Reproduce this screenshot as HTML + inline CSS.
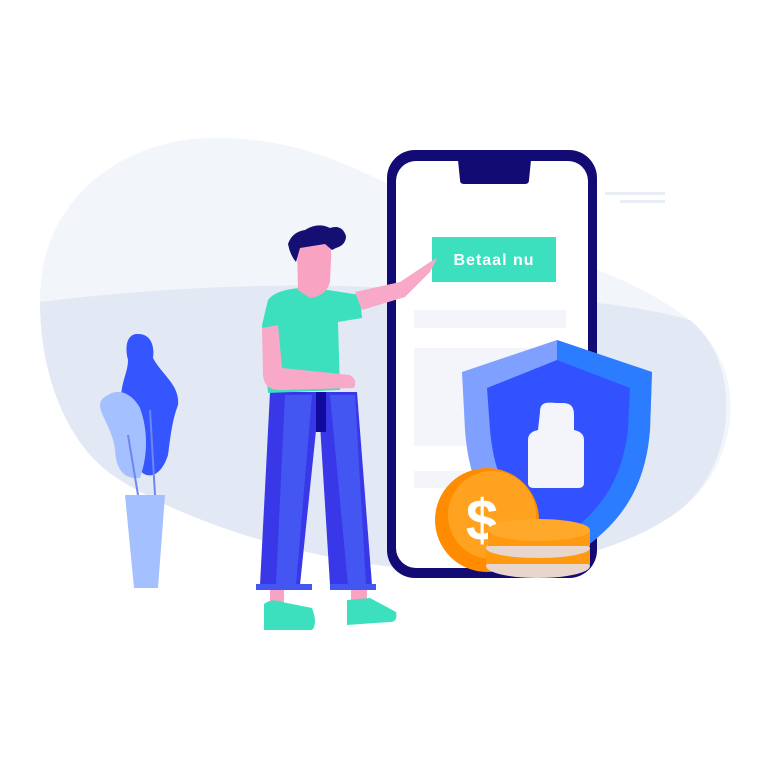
<!DOCTYPE html>
<html><head><style>html,body{margin:0;padding:0;background:#fff}svg{display:block}</style></head>
<body>
<svg width="771" height="771" viewBox="0 0 771 771" xmlns="http://www.w3.org/2000/svg">
<path d="M40,300 C40,200 120,140 210,138 C300,136 360,170 420,200 C520,250 640,270 700,330 C750,380 735,470 680,510 C620,555 520,575 430,570 C330,565 200,530 120,480 C70,450 40,380 40,300Z" fill="#f2f5fa"/>
<path d="M40,302 C150,288 300,280 420,290 C540,298 620,300 690,320 C740,360 740,460 680,510 C620,555 520,575 430,570 C330,565 200,530 120,480 C70,450 40,380 40,302Z" fill="#e3e9f4"/>
<g fill="#e8edf6"><rect x="605" y="192" width="60" height="3"/><rect x="620" y="200" width="45" height="3"/></g>
<path d="M137,334 C150,333 155,345 153,358 C162,375 180,385 178,405 C172,420 170,440 168,455 C160,480 145,478 140,470 C130,450 125,430 122,410 C118,385 128,375 128,360 C124,345 128,334 137,334Z" fill="#3555ff"/>
<path d="M108,395 C118,388 132,393 140,408 C148,430 148,455 140,478 C125,480 116,470 115,450 C113,430 100,415 100,405 C100,400 104,397 108,395Z" fill="#a4c0ff"/>
<path d="M125,495 L165,495 L158,588 L134,588Z" fill="#a4c0ff"/>
<path d="M128,435 L138,495 M150,410 L155,495" stroke="#6e86f0" stroke-width="2" fill="none"/>
<rect x="387" y="150" width="210" height="428" rx="28" fill="#120b73"/>
<rect x="396" y="161" width="192" height="407" rx="20" fill="#fff"/>
<path d="M458,160 L531,160 L529,180 Q529,184 525,184 L464,184 Q460,184 460,180Z" fill="#120b73"/>
<rect x="432" y="237" width="124" height="45" fill="#3ce0bf"/>
<text x="494" y="265" text-anchor="middle" font-family="Liberation Sans, sans-serif" font-weight="bold" font-size="16" fill="#fff" letter-spacing="1">Betaal nu</text>
<rect x="414" y="310" width="152" height="18" fill="#f3f5fa"/>
<rect x="414" y="348" width="120" height="98" fill="#f3f5fa"/>
<rect x="414" y="471" width="50" height="17" fill="#f3f5fa"/>
<path d="M557,340 L652,372 L650,430 C645,490 620,530 557,565 C500,535 470,500 465,430 L462,372Z" fill="#7fa0ff"/>
<path d="M557,340 L652,372 L650,430 C645,490 620,530 557,565Z" fill="#2c7cff"/>
<path d="M557,360 L630,388 L628,430 C622,480 600,515 557,540 C515,515 495,485 490,430 L487,388Z" fill="#3352ff"/>
<path d="M540,412 C540,400 550,403 557,403 C566,403 574,402 574,415 L574,430 Q584,432 584,440 L584,483 Q584,488 578,488 L534,488 Q528,488 528,483 L528,440 Q528,432 538,430Z" fill="#f3f5fa"/>
<circle cx="487" cy="520" r="52" fill="#ff8c00"/>
<circle cx="492" cy="515" r="44" fill="#ffa21f"/>
<text x="482" y="540" text-anchor="middle" font-family="Liberation Sans, sans-serif" font-weight="bold" font-size="58" fill="#fff">$</text>
<ellipse cx="538" cy="566" rx="52" ry="12" fill="#e8d6cc"/>
<rect x="486" y="548" width="104" height="16" fill="#ff9a10"/>
<ellipse cx="538" cy="548" rx="52" ry="10" fill="#e8d6cc"/>
<rect x="488" y="530" width="102" height="16" fill="#ff9a10"/>
<ellipse cx="539" cy="530" rx="51" ry="11" fill="#ffa82a"/>
<rect x="270" y="586" width="14" height="18" fill="#f9a3c3"/>
<rect x="351" y="586" width="16" height="14" fill="#f9a3c3"/>
<path d="M264,604 Q272,598 282,602 L312,608 Q318,624 312,630 L264,630Z" fill="#3ce0bf"/>
<path d="M347,600 L370,598 L396,612 Q398,622 390,622 L347,625Z" fill="#3ce0bf"/>
<path d="M270,392 L320,392 L300,585 L260,585Z" fill="#3838e8"/>
<path d="M318,392 L357,392 L372,585 L330,585Z" fill="#3838e8"/>
<path d="M285,395 L312,395 L296,585 L276,585Z" fill="#4456f2"/>
<path d="M330,395 L355,395 L366,585 L348,585Z" fill="#4456f2"/>
<rect x="256" y="584" width="56" height="6" fill="#4456f2"/>
<rect x="330" y="584" width="46" height="6" fill="#4456f2"/>
<rect x="316" y="392" width="10" height="40" fill="#100a9e"/>
<path d="M303,285 L320,285 L318,300 L305,300Z" fill="#f9a3c3"/>
<path d="M268,300 Q275,290 300,288 L328,290 L360,295 L362,318 L338,322 L340,390 L268,393 L262,325Z" fill="#3ce0bf"/>
<path d="M262,328 L278,325 L282,368 L350,375 Q358,380 354,388 L280,390 Q264,390 263,375Z" fill="#f9a9c8"/>
<path d="M355,292 L400,282 L430,262 L437,258 L430,272 L405,297 L362,310Z" fill="#f9a9c8"/>
<path d="M297,248 Q296,232 312,232 L325,233 Q332,240 331,260 L330,282 Q326,296 310,298 L298,290Z" fill="#f9a3c3"/>
<path d="M288,244 Q292,232 305,230 Q318,222 330,228 Q342,224 346,236 Q346,245 336,248 L332,250 L325,244 L300,248 L296,262 Q290,255 288,244Z" fill="#150e73"/>
</svg>
</body></html>
